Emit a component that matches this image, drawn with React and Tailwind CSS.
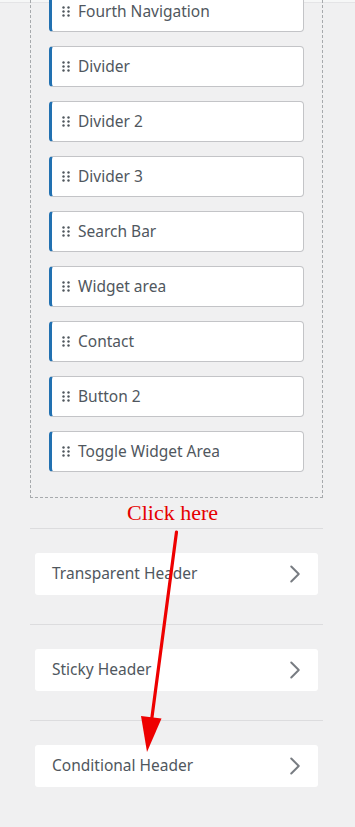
import { ChevronRight } from "lucide-react";

const items = [
  "Fourth Navigation",
  "Divider",
  "Divider 2",
  "Divider 3",
  "Search Bar",
  "Widget area",
  "Contact",
  "Button 2",
  "Toggle Widget Area",
];

const panels = ["Transparent Header", "Sticky Header", "Conditional Header"];

function Grip() {
  return (
    <svg width="8" height="11" viewBox="0 0 8 11" className="shrink-0">
      {[1.5, 6.5].map((x) =>
        [1.5, 5.5, 9.5].map((y) => (
          <circle key={`${x}-${y}`} cx={x} cy={y} r="1.2" fill="#50575e" />
        ))
      )}
    </svg>
  );
}

function ItemRow({ label }) {
  return (
    <div className="h-[41px] flex items-center gap-[8px] bg-white border border-[#c3c4c7] border-l-[3px] border-l-[#2271b1] rounded-[4px] pl-[10px]">
      <Grip />
      <span className="text-[15.5px] text-[#50575e]">{label}</span>
    </div>
  );
}

function PanelRow({ label }) {
  return (
    <div className="border-t border-[#dcdcde] pt-[24px] pb-[29px]">
      <div className="mx-[5px] h-[42px] bg-white rounded-[3px] flex items-center justify-between pl-[17px] pr-[8px]">
        <span className="text-[15.5px] text-[#50575e]">{label}</span>
        <ChevronRight size={30} strokeWidth={1.6} className="text-[#787c82]" />
      </div>
    </div>
  );
}

export default function App() {
  return (
    <div
      className="relative w-[355px] h-[827px] overflow-hidden bg-[#f0f0f1]"
      style={{ fontFamily: '"Noto Sans", "Open Sans", sans-serif' }}
    >
      <div className="h-[3px] bg-[#f6f7f7] border-b border-[#e4e4e6]" />

      <div className="ml-[30px] w-[293px]">
        <div className="-mt-[33px] border border-dashed border-[#a7aaad] px-[18px] pt-[20px] pb-[25px] flex flex-col gap-[14px]">
          {items.map((label) => (
            <ItemRow key={label} label={label} />
          ))}
        </div>

        <div className="h-[30px] flex items-center justify-center pr-[8px]">
          <span
            className="text-[22px] leading-none text-[#e60000]"
            style={{ fontFamily: '"Liberation Serif", serif' }}
          >
            Click here
          </span>
        </div>

        {panels.map((label) => (
          <PanelRow key={label} label={label} />
        ))}
      </div>

      <svg
        className="absolute left-0 top-0 pointer-events-none"
        width="355"
        height="827"
        viewBox="0 0 355 827"
      >
        <line x1="176.5" y1="532" x2="151.6" y2="720" stroke="#ee0000" strokeWidth="3.2" strokeLinecap="round" />
        <polygon points="141,716 161.5,718.6 147,752" fill="#ee0000" />
      </svg>
    </div>
  );
}
